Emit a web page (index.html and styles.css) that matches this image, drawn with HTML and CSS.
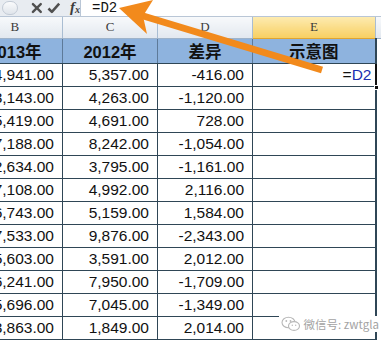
FILE: index.html
```html
<!DOCTYPE html>
<html lang="en">
<head>
  <meta charset="UTF-8" />
  <title>示意图</title>
  <link rel="stylesheet" href="styles.css">
</head>
<body>
  <div class="FormulaBar">
    <div class="Tools">
      <span class="knob"></span>
      <svg class="tool" width="12" height="12" viewBox="0 0 12 12">
        <path d="M2 2 L10 10 M10 2 L2 10" stroke="#505050" stroke-width="2.4" stroke-linecap="round"/>
      </svg>
      <svg class="tool" width="14" height="12" viewBox="0 0 14 12">
        <path d="M1.5 6.5 L5 10 L12.5 1.5" fill="none" stroke="#505050" stroke-width="2.6" stroke-linejoin="round"/>
      </svg>
      <span class="fx"><i>f</i><sub>x</sub></span>
    </div>
    <div class="Input">=D2</div>
  </div>

  <div class="Sheet">
    <table class="Grid">
      <colgroup>
        <col class="w95"><col class="w95"><col class="w95"><col class="w123"><col class="wrest">
      </colgroup>
      <tr class="Letters">
        <th>B</th><th>C</th><th>D</th><th class="active">E</th><th class="blank"></th>
      </tr>
      <tr class="Head">
        <td>2013年</td><td>2012年</td><td>差异</td><td>示意图</td><td class="blank"></td>
      </tr>
      <tr>
        <td>4,941.00</td><td>5,357.00</td><td class="copy">-416.00</td>
        <td class="edit">=<span class="ref">D2</span><span class="handle"></span></td><td class="blank"></td>
      </tr>
      <tr><td>3,143.00</td><td>4,263.00</td><td>-1,120.00</td><td></td><td class="blank"></td></tr>
      <tr><td>5,419.00</td><td>4,691.00</td><td>728.00</td><td></td><td class="blank"></td></tr>
      <tr><td>7,188.00</td><td>8,242.00</td><td>-1,054.00</td><td></td><td class="blank"></td></tr>
      <tr><td>2,634.00</td><td>3,795.00</td><td>-1,161.00</td><td></td><td class="blank"></td></tr>
      <tr><td>7,108.00</td><td>4,992.00</td><td>2,116.00</td><td></td><td class="blank"></td></tr>
      <tr><td>6,743.00</td><td>5,159.00</td><td>1,584.00</td><td></td><td class="blank"></td></tr>
      <tr><td>7,533.00</td><td>9,876.00</td><td>-2,343.00</td><td></td><td class="blank"></td></tr>
      <tr><td>5,603.00</td><td>3,591.00</td><td>2,012.00</td><td></td><td class="blank"></td></tr>
      <tr><td>6,241.00</td><td>7,950.00</td><td>-1,709.00</td><td></td><td class="blank"></td></tr>
      <tr><td>5,696.00</td><td>7,045.00</td><td>-1,349.00</td><td></td><td class="blank"></td></tr>
      <tr><td>3,863.00</td><td>1,849.00</td><td>2,014.00</td><td></td><td class="blank"></td></tr>
      <tr class="Next"><td></td><td></td><td></td><td></td><td class="blank"></td></tr>
    </table>
  </div>

  <svg class="Arrow" width="381" height="100" viewBox="0 0 381 100">
    <line x1="322" y1="70" x2="140" y2="15" stroke="#f28a1c" stroke-width="7"/>
    <polygon points="119,8 153,0 143,16 147,34" fill="#f28a1c"/>
  </svg>

  <div class="Mark">
    <svg class="wx" width="20" height="16" viewBox="0 0 20 16">
      <ellipse cx="7.5" cy="6.5" rx="6.5" ry="5.3" fill="none" stroke="#b8b8b8" stroke-width="1.1"/>
      <ellipse cx="13" cy="10" rx="5.5" ry="4.4" fill="#fff" stroke="#b8b8b8" stroke-width="1.1"/>
      <circle cx="5.3" cy="5" r="0.9" fill="#b8b8b8"/>
      <circle cx="9.5" cy="5" r="0.9" fill="#b8b8b8"/>
      <circle cx="11.3" cy="9.2" r="0.7" fill="#b8b8b8"/>
      <circle cx="14.7" cy="9.2" r="0.7" fill="#b8b8b8"/>
    </svg>
    <span>微信号: zwtgla</span>
  </div>
</body>
</html>
```

FILE: styles.css
```css
* {
  margin: 0;
  padding: 0;
  box-sizing: border-box;
}
html, body {
  width: 381px;
  height: 340px;
  overflow: hidden;
  background-color: #fff;
  font-family: 'Liberation Sans', Arial, sans-serif;
}
body {
  position: relative;
}

/* Formula bar */
.FormulaBar {
  display: flex;
  height: 17px;
  border-bottom: 1px solid #b9c6d6;
  background-color: #e8ecf1;
}
.Tools {
  width: 80px;
  display: flex;
  align-items: center;
  padding-left: 2px;
  gap: 5px;
}
.knob {
  width: 16px;
  height: 14px;
  border-radius: 8px;
  border: 1px solid #c3cbd6;
  background: linear-gradient(#fafbfc, #dfe4ea);
  margin-right: 8px;
}
.tool {
  display: block;
}
.fx {
  font-family: 'Liberation Serif', serif;
  font-size: 15px;
  font-weight: bold;
  line-height: 16px;
  color: #3c3c3c;
  margin-left: 4px;
}
.fx sub {
  font-size: 10px;
  font-style: italic;
  vertical-align: -1px;
}
.Input {
  flex: 1;
  background-color: #fff;
  border-left: 1px solid #b9c6d6;
  font-family: 'Liberation Mono', monospace;
  font-size: 14px;
  line-height: 16px;
  padding-left: 11px;
  color: #111;
}

/* Sheet */
.Sheet {
  margin-left: -33px;
}
.Grid {
  border-collapse: collapse;
  table-layout: fixed;
  width: 414px;
}
.w95 { width: 95px; }
.w123 { width: 123px; }
.wrest { width: 6px; }

.Grid td {
  height: 23px;
  border: 1px solid #2f4656;
  text-align: right;
  padding: 0 8px 0 0;
  font-size: 15.5px;
  color: #111;
  white-space: nowrap;
  overflow: hidden;
  position: relative;
}
.Grid td.blank {
  border: none;
  border-left: 2px solid #2f4656;
  padding: 0;
}

.Letters th {
  height: 21px;
  font-family: 'Liberation Serif', serif;
  font-weight: normal;
  font-size: 13px;
  color: #3b3b3b;
  background: linear-gradient(#f7f9fb, #e2e8ef);
  border-right: 1px solid #a9bdd2;
  border-bottom: 1px solid #9fb3c9;
}
.Letters th.active {
  background: linear-gradient(#fdebb0, #f7cf62);
  border-bottom-color: #e0a530;
}
.Letters th.blank {
  border-right: none;
}

.Head td {
  height: 22px;
  background-color: #8eb3de;
  text-align: center;
  padding: 0;
  font-family: 'Liberation Sans', 'Noto Sans CJK SC', sans-serif;
  font-weight: bold;
  font-size: 16.5px;
  color: #111;
  border-color: #5d7a99;
  border-bottom-color: #2f4656;
}
.Head td.blank {
  background-color: #fff;
  border-left: 2px solid #2f4656;
}

.Grid td.copy {
  border: 1px dashed #1b2a8c;
}
.Grid td.edit {
  padding-right: 3px;
  border-right: 2px solid #111;
  overflow: visible;
}
.ref {
  color: #1c2fb0;
}
.handle {
  position: absolute;
  right: -4px;
  bottom: -4px;
  width: 5px;
  height: 5px;
  background-color: #111;
  border: 1px solid #fff;
}
.Next td {
  height: 10px;
}

/* Overlays */
.Arrow {
  position: absolute;
  left: 0;
  top: 0;
}
.Mark {
  position: absolute;
  right: 2px;
  top: 316px;
  display: flex;
  align-items: center;
  gap: 3px;
  background-color: #fff;
  padding-left: 2px;
  font-family: 'Noto Sans CJK SC', sans-serif;
  font-size: 11.5px;
  color: #a3a3a3;
}
```
